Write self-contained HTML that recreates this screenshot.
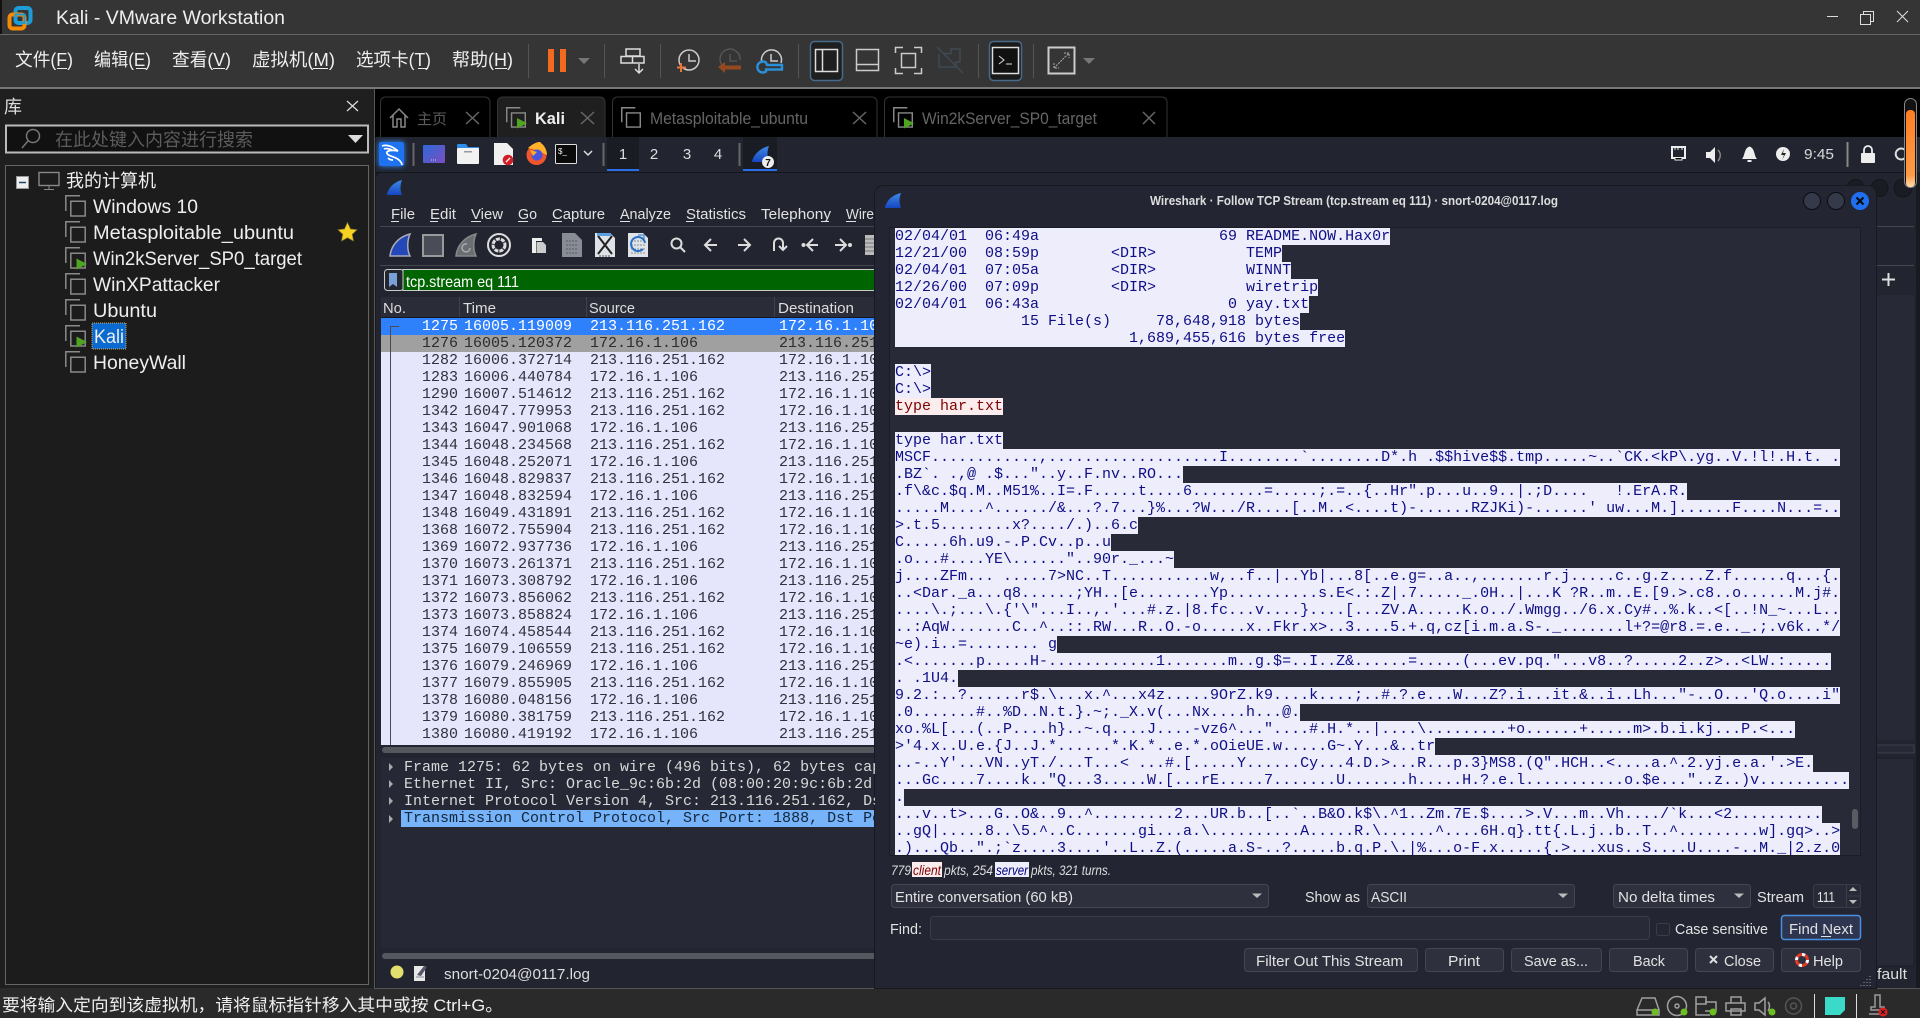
<!DOCTYPE html>
<html><head><meta charset="utf-8"><title>Kali - VMware Workstation</title>
<style>
html,body{margin:0;padding:0;width:1920px;height:1018px;overflow:hidden;background:#2a2a2a}
svg{position:absolute;left:0;top:0}
svg text{font-family:"Liberation Sans","Noto Sans CJK SC",sans-serif;white-space:pre}
.m{position:absolute;font:15px/17px "Liberation Mono",monospace;white-space:pre}
#rows{left:381px;top:318px;width:494px;height:427px;background:#e5e5fb;color:#30323c;overflow:hidden;z-index:2}
#rows div{height:17px;padding-left:41px}
#rows b{font-weight:normal;display:inline-block;width:36px;margin-right:6px}
#det{left:404px;top:759px;width:471px;color:#d8d8d8;z-index:2;overflow:hidden;height:70px}
#det div{height:17px}
#sel{position:absolute;left:401px;top:810px;width:474px;height:17px;background:#76b3f8;z-index:3}
#dlg{position:absolute;left:875px;top:186px;width:1001px;height:802px;background:#232632;border-radius:8px 8px 0 0;z-index:3;box-shadow:0 0 0 1px #171920}
#ta{position:absolute;left:890px;top:228px;width:970px;height:627px;background:#282b37;z-index:4;box-shadow:0 0 0 1px #1b1d26}
#st{left:895px;top:228px;width:965px;height:627px;overflow:hidden;z-index:5}
#st div{width:fit-content;height:17px;background:#ededfb;color:#0e0e86}
#st div.e{background:none}
#st div.c{background:#fbeded;color:#7f0000}
</style></head><body>
<svg width="1920" height="1018" viewBox="0 0 1920 1018" style="z-index:1">
<defs>
<symbol id="vm" viewBox="0 0 22 22" overflow="visible"><path d="M.8 16V.8H15M5.8 6.2H20.2V21H5.8Z" fill="none" stroke="#8a8a8a" stroke-width="1.5"/></symbol>
<symbol id="vmp" viewBox="0 0 22 22" overflow="visible"><path d="M.8 16V.8H15M5.8 6.2H20.2V21H5.8Z" fill="none" stroke="#8a8a8a" stroke-width="1.5"/><path d="M11.500 11.500L22 17L11.500 22.500Z" fill="#4fa51f"/></symbol>
<linearGradient id="fin" x1="0" y1="0" x2="0" y2="1"><stop offset="0" stop-color="#3f8ae8"/><stop offset="1" stop-color="#1546c0"/></linearGradient>
<linearGradient id="dk" x1="0" y1="0" x2="1" y2="1"><stop offset="0" stop-color="#2f68d8"/><stop offset="1" stop-color="#7a4fc0"/></linearGradient>
<linearGradient id="org" x1="0" y1="0" x2="0" y2="1"><stop offset="0" stop-color="#ff7e22"/><stop offset=".85" stop-color="#ff9a45"/><stop offset="1" stop-color="#ffe0b0"/></linearGradient>
</defs>
<!-- chrome -->
<rect width="1920" height="88" fill="#353535"/>
<rect y="34" width="1920" height="1" fill="#666"/>
<rect y="87" width="1920" height="2" fill="#777"/>
<rect x="0" y="0" width="2" height="34" fill="#111"/>
<rect x="0" y="89" width="375" height="900" fill="#1f1f1f"/>
<rect x="375" y="89" width="1545" height="48" fill="#000"/>
<rect x="375" y="137" width="1545" height="852" fill="#181a21"/>
<rect y="988" width="1920" height="30" fill="#2a2a2a"/>
<rect y="988" x="375" width="1545" height="1" fill="#555"/>
<rect x="374" y="89" width="1" height="900" fill="#555"/>
<!-- vmware logo -->
<rect x="15.500" y="8" width="15" height="15" rx="3" fill="none" stroke="#1e9cd8" stroke-width="4"/>
<rect x="9.500" y="14.500" width="15" height="14" rx="3" fill="none" stroke="#f58a07" stroke-width="4"/>
<path d="M15.500 21V14.500H24.500V23H15.500" fill="none" stroke="#1e9cd8" stroke-width="2"/>
<text x="56" y="24" font-size="19" textLength="229" lengthAdjust="spacingAndGlyphs" fill="#eee">Kali - VMware Workstation</text>
<path d="M1827 16.500H1838" stroke="#ddd" stroke-width="1"/>
<path d="M1860.500 14.500H1870.500V24.500H1860.500ZM1863.500 14V11.500H1873.500V21.500H1871" fill="none" stroke="#ddd"/>
<path d="M1897 11L1908 22M1908 11L1897 22" stroke="#ddd"/>
<!-- menu -->
<g font-size="18" fill="#eee">
<text x="15" y="66" textLength="58" lengthAdjust="spacingAndGlyphs">文件(F)</text>
<text x="94" y="66" textLength="57" lengthAdjust="spacingAndGlyphs">编辑(E)</text>
<text x="172" y="66" textLength="59" lengthAdjust="spacingAndGlyphs">查看(V)</text>
<text x="252" y="66" textLength="83" lengthAdjust="spacingAndGlyphs">虚拟机(M)</text>
<text x="356" y="66" textLength="75" lengthAdjust="spacingAndGlyphs">选项卡(T)</text>
<text x="452" y="66" textLength="61" lengthAdjust="spacingAndGlyphs">帮助(H)</text>
</g>
<path d="M57 68.500h10M136 68.500h10M213 68.500h12M313 68.500h15M418 68.500h10M495 68.500h12" stroke="#eee"/>
<g stroke="#555"><path d="M528.500 44V78M604.500 44V78M660.500 44V78M798.500 44V78M978.500 44V78M1033.500 44V78"/></g>
<rect x="548" y="49" width="6" height="23" fill="#f36a1e"/><rect x="560" y="49" width="6" height="23" fill="#f36a1e"/>
<path d="M578 58H590L584 64Z" fill="#777"/>
<path d="M1083 58H1095L1089 64Z" fill="#777"/>
<!-- send keys -->
<g fill="none" stroke="#ddd" stroke-width="1.500"><path d="M626 49H640V56H626ZM621 56.500H644V63H621ZM632.500 56.500V63"/><path d="M639 64V72M635 69l4 4 4-4"/></g>
<!-- snapshot icons -->
<g fill="none" stroke-width="1.500"><circle cx="689" cy="60" r="10" stroke="#ccc"/><path d="M689 54V61H696" stroke="#ccc"/><path d="M681 63V72M677 67.500H686" stroke="#e8763a" stroke-width="2"/>
<path d="M722 65A10 10 0 1 1 740 60M730 54V61H737" stroke="#555"/>
<path d="M762 63A10 10 0 1 1 781 63" stroke="#ccc"/><path d="M771 54V61H778" stroke="#ccc"/></g>
<path d="M718 67l7-5v3.500H741v4H725V73Z" fill="#94491f"/>
<path d="M766 62.500A5.500 5.500 0 1 0 766 71.500V69.500H782V65H767Z" fill="none" stroke="#2a90da" stroke-width="2.400"/>
<!-- layout buttons -->
<rect x="810.500" y="41.500" width="32" height="39" rx="4" fill="#1f1f1f" stroke="#466a8a" stroke-width="1.500"/>
<path d="M815.500 49.500H837.500V71.500H815.500ZM822.500 49.500V71.500" fill="none" stroke="#ddd" stroke-width="1.500"/>
<path d="M856.500 49.500H878.500V70.500H856.500ZM856.500 64.500H878.500" fill="none" stroke="#ccc" stroke-width="1.500"/>
<path d="M895.500 53V47.500H903M914 47.500H921.500V53M921.500 68V73.500H914M903 73.500H895.500V68M901.500 53.500H915.500V67.500H901.500Z" fill="none" stroke="#ccc" stroke-width="1.500"/>
<path d="M937 47L963 73M944 53.500H951V49H960V62H956V67H939V54" fill="none" stroke="#3f4a55" stroke-width="1.500"/>
<rect x="989.500" y="41.500" width="32" height="39" rx="4" fill="#1a1a1a" stroke="#466a8a" stroke-width="1.500"/>
<rect x="992.500" y="47.500" width="26" height="26" fill="#111" stroke="#ddd" stroke-width="1.500"/>
<path d="M999 56l5 4-5 4M1006 64h6" fill="none" stroke="#ddd"/>
<rect x="1048.500" y="47.500" width="26" height="26" fill="none" stroke="#ccc" stroke-width="2"/>
<path d="M1054 68L1069 53M1064 53h5v5M1054 63v5h5" fill="none" stroke="#aaa" stroke-dasharray="2 1"/>
<!-- library -->
<text x="4" y="113" font-size="18" fill="#ddd">库</text>
<path d="M347 101L358 111M358 101L347 111" stroke="#ddd" stroke-width="1.200"/>
<rect x="6" y="125.500" width="362" height="27" fill="#111" stroke="#bbb" stroke-width="2"/>
<circle cx="33" cy="136" r="6.500" fill="none" stroke="#777" stroke-width="1.500"/><path d="M28 141L22 148" stroke="#777" stroke-width="1.500"/>
<text x="55" y="146" font-size="18" textLength="198" lengthAdjust="spacingAndGlyphs" fill="#5c5c5c">在此处键入内容进行搜索</text>
<path d="M348 135H363L355.500 143Z" fill="#ddd"/>
<rect x="5.500" y="165.500" width="363" height="819" fill="#1c1c1c" stroke="#666"/>
<rect x="16.500" y="176.500" width="12" height="12" fill="#eee" stroke="#999"/><path d="M19 182.500H26" stroke="#246" stroke-width="1.500"/>
<rect x="39" y="172.500" width="20" height="13" fill="none" stroke="#888" stroke-width="1.400"/><path d="M49 186V189M44 189.500H54" stroke="#888"/>
<g font-size="19" fill="#eee">
<text x="66" y="187" font-size="18" textLength="90" lengthAdjust="spacingAndGlyphs">我的计算机</text>
<text x="93" y="213" textLength="105" lengthAdjust="spacingAndGlyphs">Windows 10</text>
<text x="93" y="239" textLength="201" lengthAdjust="spacingAndGlyphs">Metasploitable_ubuntu</text>
<text x="93" y="265" textLength="209" lengthAdjust="spacingAndGlyphs">Win2kServer_SP0_target</text>
<text x="93" y="291" textLength="127" lengthAdjust="spacingAndGlyphs">WinXPattacker</text>
<text x="93" y="317" textLength="64" lengthAdjust="spacingAndGlyphs">Ubuntu</text>
<rect x="92" y="323" width="34" height="26" fill="#0a6ad0" stroke="#d8a040" stroke-dasharray="1 1"/>
<text x="94" y="343" textLength="30" lengthAdjust="spacingAndGlyphs">Kali</text>
<text x="93" y="369" textLength="93" lengthAdjust="spacingAndGlyphs">HoneyWall</text>
</g>
<use href="#vm" x="65" y="195" width="22" height="22"/>
<use href="#vm" x="65" y="221" width="22" height="22"/>
<use href="#vmp" x="65" y="247" width="22" height="22"/>
<use href="#vm" x="65" y="273" width="22" height="22"/>
<use href="#vm" x="65" y="299" width="22" height="22"/>
<use href="#vmp" x="65" y="325" width="22" height="22"/>
<use href="#vm" x="65" y="351" width="22" height="22"/>
<path d="M347.500 222.500l3 6.500 6.500.8-4.800 4.500 1.300 6.700-6-3.300-6 3.300 1.300-6.700-4.800-4.500 6.500-.8Z" fill="#f7d21e" stroke="#8a7a30" stroke-width=".7"/>
<!-- tabs -->
<path d="M380.500 137V102a5 5 0 0 1 5-5H485a5 5 0 0 1 5 5V137" fill="#000" stroke="#333"/>
<path d="M497.500 137V102a5 5 0 0 1 5-5H600a5 5 0 0 1 5 5V137" fill="#1f1f1f" stroke="#333"/>
<path d="M612.500 137V102a5 5 0 0 1 5-5H872a5 5 0 0 1 5 5V137" fill="#000" stroke="#333"/>
<path d="M884.500 137V102a5 5 0 0 1 5-5H1162a5 5 0 0 1 5 5V137" fill="#000" stroke="#333"/>
<path d="M390 118L399 109L408 118M393 115V127H397V119H401V127H405V115" fill="none" stroke="#888" stroke-width="1.500"/>
<text x="417" y="124" font-size="15" textLength="30" lengthAdjust="spacingAndGlyphs" fill="#5a5a5a">主页</text>
<path d="M466 112L479 124M479 112L466 124M581 112L594 124M594 112L581 124M853 112L866 124M866 112L853 124M1143 112L1155 124M1155 112L1143 124" stroke="#666" stroke-width="1.500"/>
<use href="#vmp" x="506" y="107" width="21" height="21"/>
<text x="535" y="124" font-size="17" font-weight="bold" textLength="30" lengthAdjust="spacingAndGlyphs" fill="#eee">Kali</text>
<use href="#vm" x="621" y="107" width="21" height="21"/>
<text x="650" y="124" font-size="16.500" textLength="158" lengthAdjust="spacingAndGlyphs" fill="#666">Metasploitable_ubuntu</text>
<use href="#vmp" x="893" y="107" width="21" height="21"/>
<text x="922" y="124" font-size="16.500" textLength="175" lengthAdjust="spacingAndGlyphs" fill="#666">Win2kServer_SP0_target</text>
<!-- kali panel -->
<rect x="376" y="137" width="1544" height="35" fill="#222530"/>
<rect x="376" y="172" width="1544" height="1" fill="#15171d"/>
<rect x="379" y="142" width="25" height="24" rx="2" fill="#1f72f0" style="filter:drop-shadow(0 0 3px #2f8cff)"/>
<path d="M382 146C388 144 393 147 398 151C393 150 389 150 387 152C386 155 391 156 396 158C400 160 402 163 402 165M384 149C386 148 390 149 392 150M393 160C391 160 389 159 388 158" fill="none" stroke="#fff" stroke-width="1.700"/>
<path d="M413.500 143V166M603.500 143V166M739.500 143V166" stroke="#666" stroke-width="2"/>
<rect x="423" y="145" width="22" height="18" rx="1" fill="url(#dk)"/><path d="M431 160h5" stroke="#ccd" stroke-dasharray="1 1"/>
<path d="M457 148v-3a1 1 0 0 1 1-1h8l2 3h11v2Z" fill="#2f8fe8"/><rect x="457" y="148" width="22" height="16" rx="1" fill="#f2f2f2"/><rect x="464" y="151" width="8" height="1.500" fill="#999"/>
<path d="M494 143H507L513 149V165H494Z" fill="#f0f0f0"/><circle cx="508" cy="160" r="5.300" fill="#d01f26"/><path d="M506 162l4-4" stroke="#fff" stroke-width="1.300"/>
<circle cx="536.500" cy="155" r="10" fill="#f0562e"/><path d="M528 148C532 144 540 140 541 143C546 147 547 152 547 155L536 150Z" fill="#ffb12a"/><circle cx="537" cy="155" r="5.500" fill="#4a55dd"/><path d="M530 150L537 152L533 156Z" fill="#ffb12a"/>
<rect x="555.500" y="144.500" width="21" height="19" rx="1" fill="#0a0a0a" stroke="#ddd"/><text x="558" y="154" font-size="8" fill="#eee" font-family="Liberation Mono">$_</text>
<path d="M584 151l4 4 4-4" fill="none" stroke="#ddd" stroke-width="1.500"/>
<rect x="607" y="137" width="32" height="32" fill="#1a1c24"/>
<rect x="743" y="137" width="34" height="32" fill="#1a1c24"/>
<rect x="607" y="169" width="32" height="2" fill="#2a6fe8"/><rect x="743" y="169" width="34" height="2" fill="#2a6fe8"/>
<g font-size="15" fill="#ddd" text-anchor="middle"><text x="623" y="159">1</text><text x="654" y="159">2</text><text x="687" y="159">3</text><text x="718" y="159">4</text></g>
<path d="M752 162C753 155 760 148 769 146C767 151 767 157 769 162Z" fill="url(#fin)"/>
<circle cx="768" cy="162" r="6" fill="#eee"/><text x="768" y="166" font-size="10" font-weight="bold" text-anchor="middle" fill="#111">7</text>
<rect x="1672" y="147" width="13" height="11" fill="none" stroke="#eee" stroke-width="2"/><path d="M1675 148v2M1678 148v2M1682 148v2M1675 158v2h7v-2" stroke="#eee"/>
<path d="M1706 152H1710L1715 147V163L1710 158H1706Z" fill="#eee"/><path d="M1718 150C1721 153 1721 157 1718 161" fill="none" stroke="#888" stroke-width="1.500"/>
<path d="M1742 159C1745 156 1744 148 1749.500 146.500C1755 148 1754 156 1757 159Z" fill="#eee"/><rect x="1747.500" y="160" width="4" height="2" fill="#eee"/>
<circle cx="1783" cy="154" r="7" fill="#eee"/><path d="M1784 149L1781 155H1784L1782 160L1786 153H1783Z" fill="#222"/>
<text x="1804" y="159" font-size="15" textLength="30" lengthAdjust="spacingAndGlyphs" fill="#d8d8d8">9:45</text>
<rect x="1846.500" y="142" width="2" height="25" fill="#888"/>
<rect x="1861" y="153" width="14" height="10" rx="1" fill="#eee"/><path d="M1864 153V150a4 4 0 0 1 8 0V153" fill="none" stroke="#eee" stroke-width="1.800"/>
<path d="M1905 150A5.500 5.500 0 1 0 1905 158" fill="none" stroke="#ddd" stroke-width="2"/>
<!-- wireshark window -->
<path d="M376 988V179a6 6 0 0 1 6-6H1910a6 6 0 0 1 6 6V988Z" fill="#222530"/>
<path d="M387 195C388 188 394 182 402 180C400 185 400 190 402 195Z" fill="url(#fin)"/>
<g font-size="15" fill="#e2e2e2">
<text x="391" y="219" textLength="24" lengthAdjust="spacingAndGlyphs">File</text>
<text x="430" y="219" textLength="26" lengthAdjust="spacingAndGlyphs">Edit</text>
<text x="471" y="219" textLength="32" lengthAdjust="spacingAndGlyphs">View</text>
<text x="518" y="219" textLength="19" lengthAdjust="spacingAndGlyphs">Go</text>
<text x="552" y="219" textLength="53" lengthAdjust="spacingAndGlyphs">Capture</text>
<text x="620" y="219" textLength="51" lengthAdjust="spacingAndGlyphs">Analyze</text>
<text x="686" y="219" textLength="60" lengthAdjust="spacingAndGlyphs">Statistics</text>
<text x="761" y="219" textLength="70" lengthAdjust="spacingAndGlyphs">Telephony</text>
<text x="846" y="219" textLength="28" lengthAdjust="spacingAndGlyphs">Wire</text>
</g>
<path d="M391 221.500h8M430 221.500h8M471 221.500h10M518 221.500h10M552 221.500h10M620 221.500h10M686 221.500h8M821 221.500h8M846 221.500h10" stroke="#e2e2e2"/>
<rect x="380" y="226" width="1534" height="1" fill="#45474f"/>
<rect x="380" y="265" width="1534" height="1" fill="#45474f"/>
<!-- ws toolbar -->
<path d="M390 256C391 246 398 237 410 234C407 241 407 250 410 256Z" fill="#2348b8" stroke="#aab" stroke-width="1.500"/>
<rect x="423" y="235" width="20" height="21" fill="#4a4d58" stroke="#9a9a9a" stroke-width="2"/>
<path d="M456 256C457 246 464 237 476 234C473 241 473 250 476 256Z" fill="#6a6d72" stroke="#888" stroke-width="1.500"/>
<path d="M470 248a4 4 0 1 1-3-4" fill="none" stroke="#aaa" stroke-width="1.500"/>
<circle cx="499" cy="245" r="11" fill="none" stroke="#ddd" stroke-width="2"/><circle cx="499" cy="245" r="6" fill="none" stroke="#ddd" stroke-width="3" stroke-dasharray="4 1"/>
<path d="M532 238H542V241H536V253H532Z" fill="#eee"/><path d="M536.500 242H543L546 245V253H536.500Z" fill="#ccc"/>
<path d="M562 233H575L582 240V257H562Z" fill="#888c94"/><path d="M566 241h12M566 245h12M566 249h12M566 253h12" stroke="#5a5d66" stroke-dasharray="2 1"/>
<path d="M595 233H610L615 238V257H595Z" fill="#dfe3e8"/><path d="M598 236L612 254M612 236L598 254" stroke="#222" stroke-width="2"/><rect x="597" y="233" width="14" height="3" fill="#5aa0e0"/><path d="M599 256h12" stroke="#555" stroke-dasharray="2 1"/>
<path d="M628 233H643L648 238V257H628Z" fill="#dfe3e8"/><path d="M631 241h14M631 245h14M631 249h14M631 253h14" stroke="#8a8d96" stroke-dasharray="2 1"/><path d="M645 243a7 7 0 1 0-2 6" fill="none" stroke="#2a70c8" stroke-width="2"/><path d="M638 235h6v6" fill="none" stroke="#2a70c8"/>
<g fill="none" stroke="#ddd" stroke-width="2"><circle cx="676.500" cy="243.500" r="5"/><path d="M680 247l5 5"/>
<path d="M717 245H706M711 239l-6 6 6 6M738 245H749M744 239l6 6-6 6"/>
<path d="M774 251V243a4.500 4.500 0 0 1 9 0V249M779 246l4 4 4-4"/>
<path d="M818 245H808M813 239l-6 6 6 6M835 245H845M840 239l6 6-6 6"/></g>
<circle cx="803.500" cy="245" r="2" fill="#ddd"/><circle cx="850" cy="245" r="2" fill="#ddd"/>
<rect x="865" y="235" width="10" height="20" fill="#bbb"/><path d="M865 239h10M865 243h10M865 247h10M865 251h10" stroke="#777"/>
<!-- filter -->
<rect x="384.500" y="269.500" width="19" height="21" rx="3" fill="#23262f" stroke="#ccc"/>
<rect x="403" y="269.500" width="472" height="21" fill="#006400" stroke="#ccc"/>
<path d="M389 273H397V287L393 284L389 287Z" fill="#7aa0d8"/>
<text x="406" y="287" font-size="16" textLength="113" lengthAdjust="spacingAndGlyphs" fill="#fff">tcp.stream eq 111</text>
<!-- header -->
<rect x="381" y="297" width="495" height="21" fill="#2a2d38"/>
<path d="M459.500 297V317M586.500 297V317M774.500 297V317" stroke="#3f424e"/>
<rect x="381" y="317" width="495" height="1" fill="#16181f"/>
<g font-size="15" fill="#ddd">
<text x="383" y="313" textLength="23" lengthAdjust="spacingAndGlyphs">No.</text>
<text x="463" y="313" textLength="33" lengthAdjust="spacingAndGlyphs">Time</text>
<text x="589" y="313" textLength="46" lengthAdjust="spacingAndGlyphs">Source</text>
<text x="778" y="313" textLength="76" lengthAdjust="spacingAndGlyphs">Destination</text>
</g>
<rect x="382" y="747" width="494" height="6" rx="3" fill="#55575f"/>
<rect x="381" y="758" width="495" height="190" fill="#262935"/>
<rect x="382" y="953" width="494" height="6" rx="3" fill="#55575f"/>
<path d="M389 763l4 4-4 4ZM389 780l4 4-4 4ZM389 797l4 4-4 4ZM389 815l4 4-4 4Z" fill="#aaa"/>
<circle cx="397" cy="972" r="6.500" fill="#e3df6e"/>
<path d="M414 966H425V981H414Z" fill="#e8e8e8"/><path d="M417 975L424 966l3 1-6 9Z" fill="#556"/><path d="M416 977h8" stroke="#889"/>
<text x="444" y="979" font-size="15" textLength="146" lengthAdjust="spacingAndGlyphs" fill="#ddd">snort-0204@0117.log</text>
<!-- right of dialog -->
<circle cx="1855.500" cy="188" r="8.500" fill="#1a1c24" stroke="#14151b"/><circle cx="1879.500" cy="188" r="8.500" fill="#1a1c24" stroke="#14151b"/><circle cx="1903" cy="188" r="9" fill="#1a1c24" stroke="#14151b"/>
<path d="M1882 279.500H1895M1888.500 273V286" stroke="#ddd" stroke-width="2"/>
<rect x="1876" y="295" width="38" height="445" fill="#272a36"/>
<rect x="1876" y="745" width="38" height="8" fill="#272a36" stroke="#3c3f4a"/>
<rect x="1876" y="758" width="38" height="208" fill="#272a36" stroke="#1b1d26"/>
<text x="1877" y="979" font-size="15" textLength="30" lengthAdjust="spacingAndGlyphs" fill="#ddd">fault</text>
<!-- scrollbar orange -->
<rect x="1904.500" y="98.500" width="12" height="89" rx="6" fill="#111" stroke="#888"/>
<rect x="1906" y="110" width="9" height="77" rx="4" fill="url(#org)"/>
<!-- status -->
<text x="2" y="1011" font-size="17" textLength="501" lengthAdjust="spacingAndGlyphs" fill="#eee">要将输入定向到该虚拟机，请将鼠标指针移入其中或按 Ctrl+G。</text>
<g fill="none" stroke="#a0a0a0" stroke-width="1.500">
<path d="M1642 998H1655L1659 1010V1015H1637V1010ZM1637 1010H1659"/>
<circle cx="1677" cy="1006" r="9.500"/><circle cx="1677" cy="1006" r="2"/>
<path d="M1696 997H1706V1004H1696ZM1705 1002H1716V1011H1705M1696 1004V1015H1710"/>
<path d="M1731 1003V997H1741V1003M1726 1003H1745V1011H1726ZM1731 1009H1741V1015H1731Z"/>
<path d="M1755 1003H1759L1765 998V1015L1759 1010H1755ZM1768 1002C1770 1004 1770 1008 1768 1011"/>
</g>
<g fill="none" stroke="#555" stroke-width="1.500"><circle cx="1793.500" cy="1006" r="8"/><circle cx="1793.500" cy="1006" r="3"/></g>
<g fill="#6cbf1f"><circle cx="1655" cy="1012" r="3.500"/><circle cx="1684" cy="1012" r="3.500"/><circle cx="1713" cy="1012" r="3.500"/><circle cx="1772" cy="1012" r="3.500"/></g>
<path d="M1814.500 994V1018M1856.500 994V1018" stroke="#ddd"/>
<path d="M1825 997H1845V1010L1840 1015H1825Z" fill="#3ad9c8"/>
<path d="M1875 995H1880V1007H1884V1010H1871V1007H1875ZM1869 1014H1887" fill="none" stroke="#999" stroke-width="1.500"/>
<circle cx="1883" cy="1012" r="4.500" fill="#e02020"/><path d="M1881 1010l4 4M1885 1010l-4 4" stroke="#111"/>
</svg>

<div class="m" id="rows"><div style="background:#2f80fb;color:#fff"><b>1275</b>16005.119009  213.116.251.162      172.16.1.106</div><div style="background:#a0a0a0;color:#2c2c2c"><b>1276</b>16005.120372  172.16.1.106         213.116.251.162</div><div><b>1282</b>16006.372714  213.116.251.162      172.16.1.106</div><div><b>1283</b>16006.440784  172.16.1.106         213.116.251.162</div><div><b>1290</b>16007.514612  213.116.251.162      172.16.1.106</div><div><b>1342</b>16047.779953  213.116.251.162      172.16.1.106</div><div><b>1343</b>16047.901068  172.16.1.106         213.116.251.162</div><div><b>1344</b>16048.234568  213.116.251.162      172.16.1.106</div><div><b>1345</b>16048.252071  172.16.1.106         213.116.251.162</div><div><b>1346</b>16048.829837  213.116.251.162      172.16.1.106</div><div><b>1347</b>16048.832594  172.16.1.106         213.116.251.162</div><div><b>1348</b>16049.431891  213.116.251.162      172.16.1.106</div><div><b>1368</b>16072.755904  213.116.251.162      172.16.1.106</div><div><b>1369</b>16072.937736  172.16.1.106         213.116.251.162</div><div><b>1370</b>16073.261371  213.116.251.162      172.16.1.106</div><div><b>1371</b>16073.308792  172.16.1.106         213.116.251.162</div><div><b>1372</b>16073.856062  213.116.251.162      172.16.1.106</div><div><b>1373</b>16073.858824  172.16.1.106         213.116.251.162</div><div><b>1374</b>16074.458544  213.116.251.162      172.16.1.106</div><div><b>1375</b>16079.106559  213.116.251.162      172.16.1.106</div><div><b>1376</b>16079.246969  172.16.1.106         213.116.251.162</div><div><b>1377</b>16079.855905  213.116.251.162      172.16.1.106</div><div><b>1378</b>16080.048156  172.16.1.106         213.116.251.162</div><div><b>1379</b>16080.381759  213.116.251.162      172.16.1.106</div><div><b>1380</b>16080.419192  172.16.1.106         213.116.251.162</div></div>
<svg width="400" height="745" style="z-index:2;pointer-events:none"><path d="M399 326.500H390.500V745" fill="none" stroke="#4a4a55"/></svg>
<div class="m" id="det" style="z-index:4"><div>Frame 1275: 62 bytes on wire (496 bits), 62 bytes cap</div><div>Ethernet II, Src: Oracle_9c:6b:2d (08:00:20:9c:6b:2d</div><div>Internet Protocol Version 4, Src: 213.116.251.162, Ds</div><div style="color:#12263c">Transmission Control Protocol, Src Port: 1888, Dst Po</div></div>
<div id="sel"></div>
<div id="dlg"></div>
<div id="ta"></div>
<div class="m" id="st"><div>02/04/01  06:49a                    69 README.NOW.Hax0r</div><div>12/21/00  08:59p        &lt;DIR&gt;          TEMP</div><div>02/04/01  07:05a        &lt;DIR&gt;          WINNT</div><div>12/26/00  07:09p        &lt;DIR&gt;          wiretrip</div><div>02/04/01  06:43a                     0 yay.txt</div><div>              15 File(s)     78,648,918 bytes</div><div>                          1,689,455,616 bytes free</div><div class="e"></div><div>C:\&gt;</div><div>C:\&gt;</div><div class="c">type har.txt</div><div class="e"></div><div>type har.txt</div><div>MSCF............,...................I........`........D*.h .$$hive$$.tmp.....~..`CK.&lt;kP\.yg..V.!l!.H.t. .</div><div>.BZ`. .,@ .$..."..y..F.nv..RO...</div><div>.f\&amp;c.$q.M..M51%..I=.F.....t....6........=.....;.=..{..Hr".p...u..9..|.;D....   !.ErA.R.</div><div>.....M....^....../&amp;...?.7...}%...?W.../R....[..M..&lt;....t)-......RZJKi)-......' uw...M.]......F....N...=..</div><div>&gt;.t.5........x?..../.)..6.c</div><div>C.....6h.u9.-.P.Cv..p..u</div><div>.o...#....YE\......"..90r._...~</div><div>j....ZFm... .....7&gt;NC..T...........w,..f..|..Yb|...8[..e.g=..a..,.......r.j.....c..g.z....Z.f......q...{.</div><div>..&lt;Dar._a...q8......;YH..[e........Yp..........s.E&lt;.:.Z|.7....._.0H..|...K ?R..m..E.[9.&gt;.c8..o......M.j#.</div><div>....\.;...\.{'\"...I..,.'...#.z.|8.fc...v....}....[...ZV.A.....K.o../.Wmgg../6.x.Cy#..%.k..&lt;[..!N_~...L..</div><div>..:AqW.......C..^..::.RW...R..O.-o.....x..Fkr.x&gt;..3....5.+.q,cz[i.m.a.S-._.......l+?=@r8.=.e.._.;.v6k..*/</div><div>~e).i..=........ g</div><div>.&lt;.......p.....H-............1.......m..g.$=..I..Z&amp;......=.....(...ev.pq."...v8..?.....2..z&gt;..&lt;LW.:.....</div><div>. .1U4.</div><div>9.2.:..?......r$.\...x.^...x4z.....9OrZ.k9....k....;..#.?.e...W...Z?.i...it.&amp;..i..Lh..."-..O...'Q.o....i"</div><div>.0.......#..%D..N.t.}.~;._X.v(...Nx....h...@.</div><div>xo.%L[...(..P....h}..~.q....J....-vz6^..."....#.H.*..|....\.........+o......+.....m&gt;.b.i.kj...P.&lt;...</div><div>&gt;'4.x..U.e.{J..J.*......*.K.*..e.*.oOieUE.w.....G~.Y...&amp;..tr</div><div>..-..Y'...VN..yT./...T...&lt; ...#.[.....Y......Cy...4.D.&gt;...R...p.3}MS8.(Q".HCH..&lt;....a.^.2.yj.e.a.'.&gt;E.</div><div>...Gc....7....k.."Q...3.....W.[...rE.....7.......U.......h.....H.?.e.l...........o.$e..."..z..)v..........</div><div>.</div><div>...v..t&gt;...G..O&amp;..9..^.........2...UR.b..[..`..B&amp;O.k$\.^1..Zm.7E.$....&gt;.V...m..Vh..../`k...&lt;2..........</div><div>..gQ|.....8..\5.^..C.......gi...a.\..........A.....R.\......^....6H.q}.tt{.L.j..b..T..^.........w].gq&gt;..&gt;</div><div>.)...Qb..".;`z....3....'..L..Z.(.....a.S-..?.....b.q.P.\.|%...o-F.x.....{.&gt;...xus..S....U....-..M._|2.z.0</div></div>
<svg width="1920" height="1018" viewBox="0 0 1920 1018" style="z-index:6">
<path d="M885 208C886 201 892 195 901 193C899 198 899 203 901 208Z" fill="url(#fin)"/>
<text x="1150" y="205" font-size="12.500" font-weight="bold" textLength="408" lengthAdjust="spacingAndGlyphs" fill="#ddd">Wireshark · Follow TCP Stream (tcp.stream eq 111) · snort-0204@0117.log</text>
<circle cx="1812" cy="201" r="8.500" fill="#343a4a" stroke="#0c0d12"/><circle cx="1836" cy="201" r="8.500" fill="#343a4a" stroke="#0c0d12"/><circle cx="1860" cy="201" r="9" fill="#1f6ff0"/>
<path d="M1856.500 197.500L1863.500 204.500M1863.500 197.500L1856.500 204.500" stroke="#0a0a0a" stroke-width="2"/>
<rect x="1852" y="809" width="6" height="20" rx="3" fill="#5a5c64"/>
<g font-size="13.500" font-style="italic" fill="#ddd">
<text x="891" y="875" textLength="20" lengthAdjust="spacingAndGlyphs">779</text>
<rect x="912" y="862" width="30" height="15" fill="#fbeded"/>
<text x="913" y="875" textLength="28" lengthAdjust="spacingAndGlyphs" fill="#7f0000">client</text>
<text x="944" y="875" textLength="49" lengthAdjust="spacingAndGlyphs">pkts, 254</text>
<rect x="995" y="862" width="34" height="15" fill="#ededfb"/>
<text x="996" y="875" textLength="32" lengthAdjust="spacingAndGlyphs" fill="#00007f">server</text>
<text x="1031" y="875" textLength="80" lengthAdjust="spacingAndGlyphs">pkts, 321 turns.</text>
</g>
<g fill="#2e313d" stroke="#45474f">
<rect x="891.500" y="884.500" width="377" height="23" rx="3"/>
<rect x="1367.500" y="884.500" width="207" height="23" rx="3"/>
<rect x="1613.500" y="884.500" width="137" height="23" rx="3"/>
</g>
<rect x="1813.500" y="884.500" width="47" height="23" rx="3" fill="#282b37" stroke="#3a3c46"/>
<rect x="930.500" y="916.500" width="719" height="23" rx="3" fill="#282b37" stroke="#3a3c46"/>
<rect x="1656.500" y="923.500" width="13" height="12" rx="2" fill="#242733" stroke="#3a3c46"/>
<path d="M1252 893.500h10l-5 4.500ZM1558 893.500h10l-5 4.500ZM1734 893.500h10l-5 4.500Z" fill="#bbb"/>
<path d="M1849 891l4-4 4 4ZM1849 900l4 4 4-4Z" fill="#bbb"/><path d="M1846.500 885V907M1847 896H1860" stroke="#3a3c46"/>
<rect x="1781.500" y="915.500" width="79" height="24" rx="3" fill="#2d3550" stroke="#4a90e2" stroke-width="1.500"/>
<g fill="#2e313d" stroke="#45474f">
<rect x="1244.500" y="948.500" width="173" height="23" rx="3"/>
<rect x="1425.500" y="948.500" width="78" height="23" rx="3"/>
<rect x="1511.500" y="948.500" width="90" height="23" rx="3"/>
<rect x="1609.500" y="948.500" width="78" height="23" rx="3"/>
<rect x="1695.500" y="948.500" width="78" height="23" rx="3"/>
<rect x="1781.500" y="948.500" width="79" height="23" rx="3"/>
</g>
<g font-size="15" fill="#e2e2e2">
<text x="895" y="902" textLength="178" lengthAdjust="spacingAndGlyphs">Entire conversation (60 kB)</text>
<text x="1305" y="902" textLength="55" lengthAdjust="spacingAndGlyphs">Show as</text>
<text x="1371" y="902" textLength="36" lengthAdjust="spacingAndGlyphs">ASCII</text>
<text x="1618" y="902" textLength="97" lengthAdjust="spacingAndGlyphs">No delta times</text>
<text x="1757" y="902" textLength="47" lengthAdjust="spacingAndGlyphs">Stream</text>
<text x="1817" y="902" textLength="18" lengthAdjust="spacingAndGlyphs">111</text>
<text x="890" y="934" textLength="32" lengthAdjust="spacingAndGlyphs">Find:</text>
<text x="1675" y="934" textLength="93" lengthAdjust="spacingAndGlyphs">Case sensitive</text>
<text x="1789" y="934" textLength="64" lengthAdjust="spacingAndGlyphs">Find Next</text>
<text x="1256" y="966" textLength="147" lengthAdjust="spacingAndGlyphs">Filter Out This Stream</text>
<text x="1448" y="966" textLength="32" lengthAdjust="spacingAndGlyphs">Print</text>
<text x="1524" y="966" textLength="64" lengthAdjust="spacingAndGlyphs">Save as...</text>
<text x="1633" y="966" textLength="32" lengthAdjust="spacingAndGlyphs">Back</text>
<text x="1724" y="966" textLength="37" lengthAdjust="spacingAndGlyphs">Close</text>
<text x="1813" y="966" textLength="30" lengthAdjust="spacingAndGlyphs">Help</text>
</g>
<path d="M1821 936.500h10" stroke="#e2e2e2"/>
<path d="M1710 956L1717 963M1717 956L1710 963" stroke="#ddd" stroke-width="2"/>
<circle cx="1802" cy="960" r="5.500" fill="none" stroke="#e03a2a" stroke-width="3"/><circle cx="1802" cy="960" r="5.500" fill="none" stroke="#fff" stroke-width="3" stroke-dasharray="3 5.600"/>
<path d="M1870 976v1M1867 979v1M1870 979v1M1864 982v1M1867 982v1M1870 982v1M1861 985v1M1864 985v1M1867 985v1M1870 985v1" stroke="#777" stroke-width="1.500"/>
</svg>
</body></html>
